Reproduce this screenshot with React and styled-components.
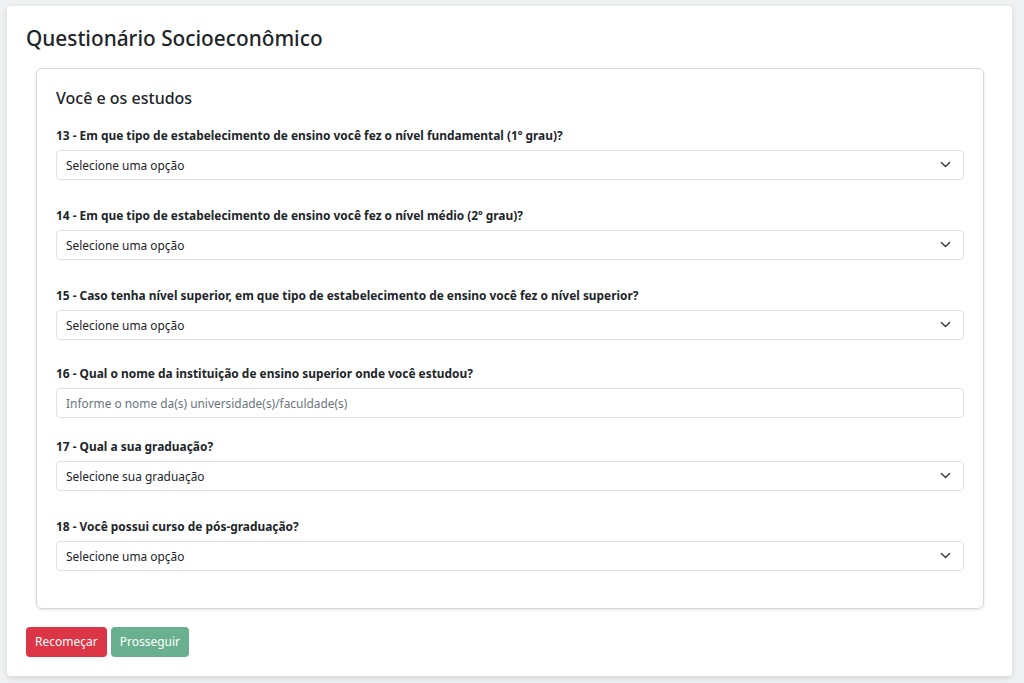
import React from "react";
import styled, { createGlobalStyle } from "styled-components";

const Global = createGlobalStyle`
  html, body { margin: 0; padding: 0; background: #f0f1f3; }
  body { font-family: "Noto Sans", "Open Sans", sans-serif; color: #212529; }
  * { box-sizing: border-box; }
`;

const Page = styled.div`
  padding: 6px 12px 7px 7px;
`;

const OuterCard = styled.div`
  background: #fff;
  border-radius: 4px;
  box-shadow: 0 2px 6px rgba(0,0,0,0.12);
  padding: 20px 19px 18px 19px;
  min-height: 670px;
`;

const Title = styled.h1`
  margin: 0 0 17px 0;
  font-size: 20.8px;
  font-weight: 500;
  line-height: 1.2;
  color: #212529;
`;

const InnerCard = styled.div`
  margin: 0 9px 0 10px;
  border: 1px solid #d6d9dc;
  border-radius: 6px;
  box-shadow: 0 1px 3px rgba(0,0,0,0.12);
  padding: 19px 19px 37px 19px;
`;

const Section = styled.h2`
  margin: 0 0 16px 0;
  font-size: 16px;
  font-weight: 500;
  line-height: 1.3;
`;

const Group = styled.div`
  margin-bottom: ${p => p.$mb ?? 25}px;
  &:last-child { margin-bottom: 0; }
`;

const Label = styled.label`
  display: block;
  font-size: 11.9px;
  font-weight: 700;
  line-height: 20px;
  margin-bottom: 5px;
`;

const Field = styled.div`
  height: 30px;
  border: 1px solid #dee2e6;
  border-radius: 4px;
  display: flex;
  align-items: center;
  justify-content: space-between;
  padding: 0 12px 0 9px;
  font-size: 11.9px;
  color: ${p => p.$placeholder ? "#6c757d" : "#212529"};
  background: #fff;
`;

const Chevron = () => (
  <svg width="11" height="11" viewBox="0 0 16 16" fill="none">
    <path d="M2 5l6 6 6-6" stroke="#343a40" strokeWidth="2" strokeLinecap="round" strokeLinejoin="round" />
  </svg>
);

const Buttons = styled.div`
  display: flex;
  gap: 4px;
  margin-top: 18px;
`;

const Button = styled.button`
  font-family: inherit;
  font-size: 12px;
  height: 30px;
  padding: 0 9px;
  border: none;
  border-radius: 4px;
  color: #fff;
  background: ${p => p.$variant === "danger" ? "#dc3545" : "#198754"};
  opacity: ${p => p.$disabled ? 0.65 : 1};
`;

const questions = [
  { label: "13 - Em que tipo de estabelecimento de ensino você fez o nível fundamental (1º grau)?", text: "Selecione uma opção" },
  { label: "14 - Em que tipo de estabelecimento de ensino você fez o nível médio (2º grau)?", text: "Selecione uma opção" },
  { label: "15 - Caso tenha nível superior, em que tipo de estabelecimento de ensino você fez o nível superior?", text: "Selecione uma opção", mb: 23 },
  { label: "16 - Qual o nome da instituição de ensino superior onde você estudou?", text: "Informe o nome da(s) universidade(s)/faculdade(s)", input: true, mb: 18 },
  { label: "17 - Qual a sua graduação?", text: "Selecione sua graduação" },
  { label: "18 - Você possui curso de pós-graduação?", text: "Selecione uma opção" },
];

export default function App() {
  return (
    <>
      <Global />
      <Page>
        <OuterCard>
          <Title>Questionário Socioeconômico</Title>
          <InnerCard>
            <Section>Você e os estudos</Section>
            {questions.map((q, i) => (
              <Group key={i} $mb={q.mb}>
                <Label>{q.label}</Label>
                <Field $placeholder={q.input}>
                  <span>{q.text}</span>
                  {!q.input && <Chevron />}
                </Field>
              </Group>
            ))}
          </InnerCard>
          <Buttons>
            <Button $variant="danger">Recomeçar</Button>
            <Button $variant="success" $disabled>Prosseguir</Button>
          </Buttons>
        </OuterCard>
      </Page>
    </>
  );
}
